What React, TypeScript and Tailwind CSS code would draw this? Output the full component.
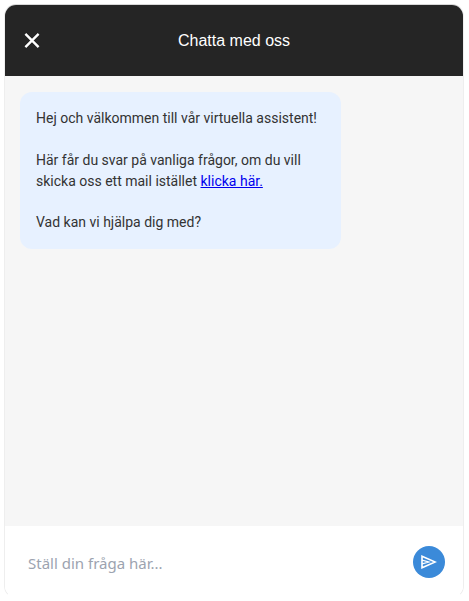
import React, { useState } from "react";

function CloseIcon() {
  return (
    <svg viewBox="0 0 24 24" className="h-6 w-6" fill="none" stroke="currentColor" strokeWidth="2.4" aria-hidden="true">
      <path d="M5.4 4.9 18.6 18.1M18.6 4.9 5.4 18.1" />
    </svg>
  );
}

function SendIcon() {
  return (
    <svg viewBox="0 0 16 14" className="h-[14px] w-4" fill="none" stroke="currentColor" aria-hidden="true">
      <path d="M1 1.2 14.2 7 1 12.8Z" strokeWidth="1.6" />
      <path d="M1 5.1 8 7 1 8.9" strokeWidth="1.1" />
    </svg>
  );
}

export default function App() {
  const [question, setQuestion] = useState("");

  return (
    <div className="h-screen bg-white pt-1 pr-[5px] pb-[3px] pl-1 font-['Roboto',sans-serif]">
      <main className="flex h-full flex-col overflow-hidden rounded-xl border border-t-[#d8d8d8] border-r-[#eeeeee] border-b-white border-l-[#eeeeee] bg-white">
        <header className="grid h-[71px] shrink-0 grid-cols-[1fr_auto_1fr] items-center bg-[#252525] px-[15px] text-white">
          <button type="button" aria-label="Stäng" className="justify-self-start">
            <CloseIcon />
          </button>
          <h1 className="font-['Liberation_Sans',Arial,sans-serif] text-base">Chatta med oss</h1>
        </header>

        <section className="flex-1 overflow-y-auto bg-[#f6f6f6] px-[15px] py-4">
          <div className="w-3/4 rounded-xl bg-[#e7f1ff] p-4 text-sm leading-[21px] text-[#333333]">
            <p>Hej och välkommen till vår virtuella assistent!</p>
            <p className="mt-[21px]">
              Här får du svar på vanliga frågor, om du vill skicka oss ett mail istället{" "}
              <a href="#mail" className="text-[#0000ee] underline">
                klicka här.
              </a>
            </p>
            <p className="mt-5">Vad kan vi hjälpa dig med?</p>
          </div>
        </section>

        <form
          className="flex h-[71px] shrink-0 items-center bg-white pr-[18px] pl-[23px]"
          onSubmit={(event) => event.preventDefault()}
        >
          <input
            type="text"
            aria-label="Ställ din fråga"
            placeholder="Ställ din fråga här..."
            value={question}
            onChange={(event) => setQuestion(event.target.value)}
            className="min-w-0 flex-1 bg-transparent pt-1 font-['Noto_Sans',sans-serif] text-[15px] text-[#333333] outline-none placeholder:text-[#9ca3af]"
          />
          <button
            type="submit"
            aria-label="Skicka"
            className="flex h-8 w-8 items-center justify-center rounded-full bg-[#3b8ad9] text-white"
          >
            <SendIcon />
          </button>
        </form>
      </main>
    </div>
  );
}
